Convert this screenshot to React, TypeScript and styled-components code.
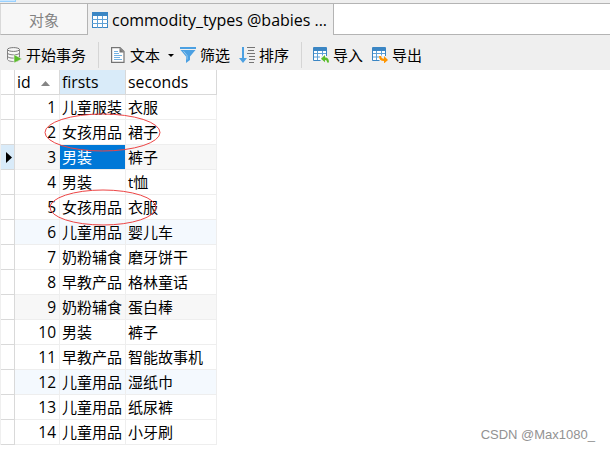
import styled, { createGlobalStyle } from "styled-components";

const GlobalStyle = createGlobalStyle`
  * {
    box-sizing: border-box;
  }
  body {
    margin: 0;
    background-color: #fff;
    font-family: "Open Sans", "Noto Sans CJK SC", sans-serif;
    font-size: 15px;
    color: #000;
    overflow: hidden;
  }
`;

const Window = styled.div`
  position: relative;
  width: 610px;
  height: 451px;
  overflow: hidden;
  background-color: #fff;
`;

const TopStrip = styled.div`
  height: 4px;
  background-color: #efefef;
  border-bottom: 1px solid #b4b4b4;
`;

const TopHandle = styled.div`
  width: 16px;
  height: 2px;
  background-color: #cce8ff;
  border-right: 1px solid #99d1ff;
  border-bottom: 1px solid #99d1ff;
`;

const Tabs = styled.div`
  display: flex;
  height: 31px;
  background-color: #efefef;
`;

const Tab = styled.div<{ $active?: boolean }>`
  display: flex;
  align-items: center;
  width: ${(props) => (props.$active ? "245px" : "88px")};
  padding: ${(props) => (props.$active ? "0 0 0 4px" : "0 0 0 28px")};
  font-size: ${(props) => (props.$active ? "16px" : "15px")};
  color: ${(props) => (props.$active ? "#000" : "#838383")};
  background-color: ${(props) => (props.$active ? "#efefef" : "#f7f7f7")};
  border-right: ${(props) => (props.$active ? "none" : "1px solid #b4b4b4")};
  border-bottom: ${(props) => (props.$active ? "none" : "1px solid #b4b4b4")};
  border-left: ${(props) => (props.$active ? "none" : "1px solid #d9d9d9")};
  white-space: nowrap;
  line-height: 20px;
  letter-spacing: -0.02px;
  svg {
    margin-right: 4px;
    flex-shrink: 0;
  }
`;

const TabTitle = styled.span<{ $drop?: number }>`
  position: relative;
  top: ${(props) => props.$drop ?? 0}px;
`;

const TabsRest = styled.div`
  flex: 1;
  background-color: #fff;
  border-left: 1px solid #b4b4b4;
  border-bottom: 1px solid #b4b4b4;
`;

const Toolbar = styled.div`
  display: flex;
  align-items: center;
  height: 35px;
  padding: 5px 0 0 6px;
  background-color: #efefef;
`;

const Tool = styled.div<{ $gap?: number; $iconGap?: number }>`
  display: flex;
  align-items: center;
  margin-right: ${(props) => props.$gap ?? 9}px;
  line-height: 20px;
  white-space: nowrap;
  svg {
    margin-right: ${(props) => props.$iconGap ?? 4}px;
    flex-shrink: 0;
  }
`;

const Caret = styled.span`
  margin-left: 8px;
  border-top: 3px solid #000;
  border-left: 3px solid transparent;
  border-right: 3px solid transparent;
`;

const Separator = styled.div<{ $gap: number }>`
  width: 1px;
  height: 26px;
  margin-right: ${(props) => props.$gap}px;
  background-color: #d5d5d5;
`;

const Grid = styled.div`
  width: 217px;
  border-left: 1px solid #efefef;
`;

const Row = styled.div<{ $bg?: string }>`
  display: grid;
  grid-template-columns: 14px 45px 66px 91px;
  height: 25px;
  background-color: ${(props) => props.$bg ?? "#fff"};
`;

const Gutter = styled.div<{ $current?: boolean }>`
  display: flex;
  align-items: center;
  padding-left: 5px;
  background-color: ${(props) => (props.$current ? "#d9ebf9" : "#fff")};
  border-right: 1px solid #d9d9d9;
  border-bottom: 1px solid #d9d9d9;
`;

const Cell = styled.div<{ $right?: boolean; $selected?: boolean }>`
  padding: 1px ${(props) => (props.$right ? "3px" : "0")} 0 2px;
  text-align: ${(props) => (props.$right ? "right" : "left")};
  font-size: ${(props) => (props.$right ? "15.5px" : "15px")};
  line-height: 23px;
  white-space: nowrap;
  color: ${(props) => (props.$selected ? "#fff" : "#000")};
  background-color: ${(props) => (props.$selected ? "#0078d7" : "transparent")};
  border-right: 1px solid #eee;
  border-bottom: 1px solid #eee;
`;

const HeadCell = styled.div<{ $active?: boolean }>`
  display: flex;
  align-items: center;
  gap: 10px;
  padding-left: 2px;
  padding-bottom: 1px;
  font-size: 15.8px;
  line-height: 20px;
  background-color: ${(props) => (props.$active ? "#d9ebf9" : "#fff")};
  border-right: 1px solid #d9d9d9;
  border-bottom: 1px solid #d9d9d9;
  svg {
    margin-top: 3px;
  }
`;

const Marks = styled.svg`
  position: absolute;
  top: 0;
  left: 0;
  pointer-events: none;
`;

const Watermark = styled.div`
  position: absolute;
  right: 15px;
  bottom: 7px;
  font-family: "Liberation Sans", sans-serif;
  font-size: 13px;
  line-height: 18px;
  color: #929292;
`;

interface IRow {
  id: number;
  firsts: string;
  seconds: string;
}

const rows: IRow[] = [
  { id: 1, firsts: "儿童服装", seconds: "衣服" },
  { id: 2, firsts: "女孩用品", seconds: "裙子" },
  { id: 3, firsts: "男装", seconds: "裤子" },
  { id: 4, firsts: "男装", seconds: "t恤" },
  { id: 5, firsts: "女孩用品", seconds: "衣服" },
  { id: 6, firsts: "儿童用品", seconds: "婴儿车" },
  { id: 7, firsts: "奶粉辅食", seconds: "磨牙饼干" },
  { id: 8, firsts: "早教产品", seconds: "格林童话" },
  { id: 9, firsts: "奶粉辅食", seconds: "蛋白棒" },
  { id: 10, firsts: "男装", seconds: "裤子" },
  { id: 11, firsts: "早教产品", seconds: "智能故事机" },
  { id: 12, firsts: "儿童用品", seconds: "湿纸巾" },
  { id: 13, firsts: "儿童用品", seconds: "纸尿裤" },
  { id: 14, firsts: "儿童用品", seconds: "小牙刷" },
];

const CURRENT_ID = 3;

// every third row is tinted, alternating grey and blue
const rowColor = (id: number) => {
  if (id % 6 === 0) return "#f4f9fe";
  if (id % 3 === 0) return "#f7f7f7";
  return "#fff";
};

function TableIcon() {
  return (
    <svg width="16" height="16" viewBox="0 0 16 16">
      <rect x="0.5" y="0.5" width="15" height="15" fill="#fff" stroke="#3b86c4" />
      <rect width="16" height="4" fill="#3b86c4" />
      <path d="M0 7.5H16M0 11.5H16M5.5 4V16M10.5 4V16" stroke="#5fa1d6" />
    </svg>
  );
}

function TransactionIcon() {
  return (
    <svg width="16" height="16" viewBox="0 0 16 16" fill="none">
      <path
        d="M1.5 2.500v9.800c0 1.300 2.700 2.200 6 2.200s6-.9 6-2.200V2.500"
        fill="#f7f7f7"
        stroke="#858585"
      />
      <ellipse cx="7.5" cy="2.5" rx="6" ry="1.9" fill="#f7f7f7" stroke="#757575" />
      <path
        d="M1.5 5.800c0 1.300 2.700 2 6 2s6-.7 6-2M1.5 9.100c0 1.300 2.700 2 6 2s6-.7 6-2"
        stroke="#757575"
      />
      <path d="M8 7.4L16 12l-8 4z" fill="#5bbd2b" stroke="#efefef" strokeWidth="0.6" />
    </svg>
  );
}

function DocumentIcon() {
  return (
    <svg width="14" height="16" viewBox="0 0 14 16" fill="none">
      <path d="M.6 .6h8.400l4 4v10.800H.6z" fill="#fff" stroke="#757575" strokeWidth="1.200" />
      <path d="M8.5 1v4.5H13z" fill="#757575" />
      <path d="M3 4.500h4M3 6.500h5M3 8.500h8M3 10.500h6M3 12.500h8" stroke="#73b2e3" />
    </svg>
  );
}

function FilterIcon() {
  return (
    <svg width="16" height="16" viewBox="0 0 16 16">
      <path d="M0 0h16v2H0z" fill="#4ba0e2" />
      <path d="M0.5 3h15L10 9.5V13l-4 3V9.5z" fill="#4ba0e2" />
      <path d="M3.5 4.2L7 8.5v4" fill="none" stroke="#9acbf0" />
    </svg>
  );
}

function SortIcon() {
  return (
    <svg width="16" height="16" viewBox="0 0 16 16">
      <path d="M3 0h2v11h3l-4 5-4-5h3z" fill="#4ba0e2" />
      <path
        d="M8 .5h8M9 3.500h6M8 6.500h8M10 9.500h6M10 12.500h6M10 15.500h5"
        stroke="#757575"
      />
    </svg>
  );
}

function TransferIcon({ out }: { out?: boolean }) {
  return (
    <svg width="16" height="16" viewBox="0 0 16 16" fill="none">
      <path d="M1 4h12v5H8v4H1z" fill="#fff" />
      <path d="M.5 1v12.500h7M13.500 1v8" stroke="#3b86c4" />
      <path d="M0 1q0-1 1-1h12q1 0 1 1v3H0z" fill="#3b86c4" />
      <path d="M1 6.500h12M1 10h6M4.500 4v9M9.500 4v4.500" stroke="#5fa1d6" />
      {out ? (
        <path
          d="M7 9h2.200c0 2 .8 2.700 2.800 2.700V9l4 4-4 3.500V14c-3.500 0-5-1.700-5-5z"
          fill="#ff9500"
        />
      ) : (
        <path
          d="M8 11.800l4-3.800v2.500c3 0 4 2 4 5h-2c0-1.800-.5-2.500-2-2.500V15.300z"
          fill="#5bbd2b"
        />
      )}
    </svg>
  );
}

function App() {
  return (
    <Window>
      <GlobalStyle />
      <TopStrip>
        <TopHandle />
      </TopStrip>
      <Tabs>
        <Tab>
          <TabTitle $drop={1}>对象</TabTitle>
        </Tab>
        <Tab $active>
          <TableIcon />
          <TabTitle>commodity_types @babies ...</TabTitle>
        </Tab>
        <TabsRest />
      </Tabs>
      <Toolbar>
        <Tool $gap={12}>
          <TransactionIcon />
          开始事务
        </Tool>
        <Separator $gap={12} />
        <Tool $gap={6} $iconGap={5}>
          <DocumentIcon />
          文本
          <Caret />
        </Tool>
        <Tool>
          <FilterIcon />
          筛选
        </Tool>
        <Tool $gap={12}>
          <SortIcon />
          排序
        </Tool>
        <Separator $gap={11} />
        <Tool>
          <TransferIcon />
          导入
        </Tool>
        <Tool>
          <TransferIcon out />
          导出
        </Tool>
      </Toolbar>
      <Grid>
        <Row>
          <Gutter />
          <HeadCell>
            id
            <svg width="9" height="5" viewBox="0 0 9 5">
              <path d="M4.500 0L9 5H0z" fill="#858585" />
            </svg>
          </HeadCell>
          <HeadCell $active>firsts</HeadCell>
          <HeadCell>seconds</HeadCell>
        </Row>
        {rows.map((row) => (
          <Row key={row.id} $bg={rowColor(row.id)}>
            <Gutter $current={row.id === CURRENT_ID}>
              {row.id === CURRENT_ID && (
                <svg width="6" height="11" viewBox="0 0 6 11">
                  <path d="M0 0l6 5.500L0 11z" fill="#000" />
                </svg>
              )}
            </Gutter>
            <Cell $right>{row.id}</Cell>
            <Cell $selected={row.id === CURRENT_ID}>{row.firsts}</Cell>
            <Cell>{row.seconds}</Cell>
          </Row>
        ))}
      </Grid>
      <Marks width="610" height="451" fill="none" stroke="#ed4545">
        <ellipse cx="102.500" cy="132.500" rx="57.500" ry="18.500" />
        <ellipse cx="103" cy="207.500" rx="53" ry="17.500" />
      </Marks>
      <Watermark>CSDN @Max1080_</Watermark>
    </Window>
  );
}
export default App;
